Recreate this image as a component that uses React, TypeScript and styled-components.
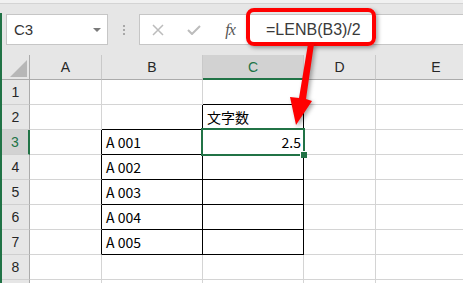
import styled, { createGlobalStyle } from 'styled-components';

const GREEN = '#217346';

const GlobalStyle = createGlobalStyle`
  html, body {
    margin: 0;
    padding: 0;
    overflow: hidden;
    background: #fff;
  }
  body {
    font-family: "Liberation Sans", Arial, sans-serif;
  }
`;

const Page = styled.div`
  position: relative;
  width: 463px;
  height: 283px;
  overflow: hidden;
  background: #e6e6e6;
`;

const TopEdge = styled.div`
  height: 3px;
  background: #f1f1f1;
  border-bottom: 1px solid #d4d4d4;
`;

const Gap = styled.div`
  height: 9px;
`;

const Workspace = styled.div`
  border-left: 2px solid ${GREEN};
`;

const FormulaBar = styled.div`
  display: flex;
  align-items: center;
  height: 42px;
  padding: 1px 0 10px 4px;
  box-sizing: border-box;
`;

const NameBox = styled.div`
  width: 102px;
  height: 31px;
  box-sizing: border-box;
  border: 1px solid #c6c6c6;
  background: #fff;
  display: flex;
  align-items: center;
  justify-content: space-between;
  padding: 0 6px 0 7px;
  font-size: 15px;
  color: #333;
`;

const DropArrow = styled.span`
  width: 0;
  height: 0;
  border-left: 4px solid transparent;
  border-right: 4px solid transparent;
  border-top: 4px solid #7a7a7a;
`;

const Splitter = styled.div`
  width: 31px;
  display: flex;
  flex-direction: column;
  align-items: center;
  gap: 2px;
`;

const Dot = styled.span`
  width: 2px;
  height: 2px;
  background: #a8a8a8;
`;

const FormulaBox = styled.div`
  flex: 1;
  height: 31px;
  box-sizing: border-box;
  border: 1px solid #c6c6c6;
  border-right: none;
  background: #fff;
  display: flex;
  align-items: center;
`;

const IconButton = styled.div`
  width: 36px;
  height: 100%;
  display: flex;
  align-items: center;
  justify-content: center;
`;

const Fx = styled.span`
  font-family: "Liberation Serif", "Times New Roman", serif;
  font-style: italic;
  font-size: 16px;
  color: #555;
  letter-spacing: -1px;
`;

const FormulaText = styled.span`
  padding-left: 18px;
  font-size: 16px;
  color: #3a3a3a;
`;

const Sheet = styled.div`
  display: grid;
  grid-template-columns: 28px 72px 101px 101px 72px 121px;
  grid-auto-rows: 25px;
  background: #fff;
`;

const HeaderBase = styled.div`
  box-sizing: border-box;
  display: flex;
  align-items: center;
  justify-content: center;
  font-size: 14px;
`;

const Corner = styled(HeaderBase)`
  position: relative;
  background: #e6e6e6;
  border-right: 1px solid #ababab;
  border-bottom: 1px solid #ababab;

  &::after {
    content: '';
    position: absolute;
    right: 2px;
    bottom: 2px;
    width: 0;
    height: 0;
    border-left: 17px solid transparent;
    border-bottom: 17px solid #b7b7b7;
  }
`;

const ColHeader = styled(HeaderBase)<{ $active?: boolean }>`
  background: ${(p) => (p.$active ? '#d2d2d2' : '#e6e6e6')};
  color: ${(p) => (p.$active ? GREEN : '#262626')};
  border-right: 1px solid #c9c9c9;
  border-bottom: ${(p) => (p.$active ? `2px solid ${GREEN}` : '1px solid #ababab')};
`;

const RowHeader = styled(HeaderBase)<{ $active?: boolean }>`
  background: ${(p) => (p.$active ? '#d2d2d2' : '#e6e6e6')};
  color: ${(p) => (p.$active ? GREEN : '#262626')};
  border-right: ${(p) => (p.$active ? `2px solid ${GREEN}` : '1px solid #ababab')};
  border-bottom: 1px solid #cfcfcf;
`;

const Cell = styled.div<{ $rb?: boolean; $bb?: boolean; $right?: boolean; $selected?: boolean }>`
  position: relative;
  box-sizing: border-box;
  display: flex;
  align-items: center;
  justify-content: ${(p) => (p.$right ? 'flex-end' : 'flex-start')};
  padding: 0 2px 0 4px;
  border-right: 1px solid ${(p) => (p.$rb ? '#000' : '#d4d4d4')};
  border-bottom: 1px solid ${(p) => (p.$bb ? '#000' : '#d4d4d4')};
  font-family: "Noto Sans CJK JP", "Noto Sans", sans-serif;
  font-size: 14px;
  color: #000;
  white-space: nowrap;
  z-index: ${(p) => (p.$selected ? 2 : 'auto')};

  ${(p) =>
    p.$selected &&
    `
    &::after {
      content: '';
      position: absolute;
      left: -2px;
      top: -2px;
      width: 104px;
      height: 28px;
      box-sizing: border-box;
      border: 2px solid ${GREEN};
    }
  `}
`;

const FillHandle = styled.span`
  position: absolute;
  left: 97px;
  top: 21px;
  width: 6px;
  height: 6px;
  background: ${GREEN};
  border-top: 1px solid #fff;
  border-left: 1px solid #fff;
  z-index: 3;
`;

const Callout = styled.div`
  position: absolute;
  left: 246px;
  top: 8px;
  width: 130px;
  height: 38px;
  box-sizing: border-box;
  border: 4px solid #ff0000;
  border-radius: 8px;
  box-shadow: 2px 2px 4px rgba(0, 0, 0, 0.35);
  z-index: 5;
`;

const Arrow = styled.svg`
  position: absolute;
  left: 286px;
  top: 40px;
  z-index: 6;
  filter: drop-shadow(2px 2px 2px rgba(0, 0, 0, 0.35));
`;

const COLS = ['A', 'B', 'C', 'D', 'E'];
// row 9 is only a sliver at the bottom edge, its number is out of view
const ROWS = [1, 2, 3, 4, 5, 6, 7, 8, 9];
const LAST_LABELLED = 8;

const values: Record<string, string> = {
  C2: '文字数',
  B3: 'A 001',
  B4: 'A 002',
  B5: 'A 003',
  B6: 'A 004',
  B7: 'A 005',
  C3: '2.5',
};

function rightBlack(col: string, row: number) {
  if (col === 'A') return row >= 3 && row <= 7;
  if (col === 'B' || col === 'C') return row >= 2 && row <= 7;
  return false;
}

function bottomBlack(col: string, row: number) {
  if (col === 'C') return row >= 1 && row <= 7;
  if (col === 'B') return row >= 2 && row <= 7;
  return false;
}

export default function App() {
  return (
    <Page>
      <GlobalStyle />
      <TopEdge />
      <Gap />
      <Workspace>
        <FormulaBar>
          <NameBox>
            C3
            <DropArrow />
          </NameBox>
          <Splitter>
            <Dot />
            <Dot />
            <Dot />
          </Splitter>
          <FormulaBox>
            <IconButton>
              <svg width="12" height="12" viewBox="0 0 12 12">
                <path d="M1 1 L11 11 M11 1 L1 11" stroke="#bcbcbc" strokeWidth="1.5" fill="none" />
              </svg>
            </IconButton>
            <IconButton>
              <svg width="14" height="10" viewBox="0 0 14 10">
                <path d="M1 5 L5 9 L13 1" stroke="#bcbcbc" strokeWidth="2" fill="none" />
              </svg>
            </IconButton>
            <IconButton>
              <Fx>fx</Fx>
            </IconButton>
            <FormulaText>=LENB(B3)/2</FormulaText>
          </FormulaBox>
        </FormulaBar>
        <Sheet>
          <Corner />
          {COLS.map((c) => (
            <ColHeader key={c} $active={c === 'C'}>
              {c}
            </ColHeader>
          ))}
          {ROWS.map((r) => [
            <RowHeader key={`h${r}`} $active={r === 3}>
              {r <= LAST_LABELLED ? r : null}
            </RowHeader>,
            ...COLS.map((c) => {
              const id = `${c}${r}`;
              const selected = id === 'C3';
              return (
                <Cell
                  key={id}
                  $rb={rightBlack(c, r)}
                  $bb={bottomBlack(c, r)}
                  $right={selected}
                  $selected={selected}
                >
                  {values[id]}
                  {selected && <FillHandle />}
                </Cell>
              );
            }),
          ])}
        </Sheet>
      </Workspace>
      <Callout />
      <Arrow width="32" height="90" viewBox="0 0 32 90">
        <polygon points="22,4 28,4 20,59 26,61 10,85 4,57 13,58" fill="#ff0000" />
      </Arrow>
    </Page>
  );
}
